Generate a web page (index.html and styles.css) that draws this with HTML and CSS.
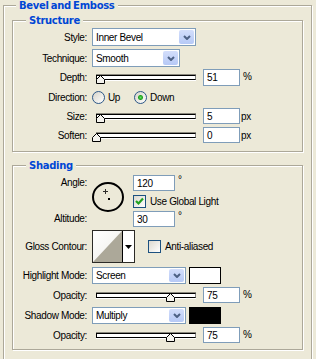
FILE: index.html
```html
<!DOCTYPE html>
<html>
<head>
<meta charset="utf-8">
<link rel="stylesheet" href="styles.css">
</head>
<body>
<fieldset class="group outer">
  <legend class="title t-outer">Bevel and Emboss</legend>

  <fieldset class="group sect sect-structure">
    <legend class="title t-inner">Structure</legend>

    <div class="row h18 first">
      <span class="lbl">Style:</span>
      <div class="select w-style"><span class="val">Inner Bevel</span><span class="drop"><svg width="8" height="5" viewBox="0 0 8 5"><path d="M1 1 L4 4 L7 1" fill="none" stroke="#4d6185" stroke-width="2"/></svg></span></div>
    </div>

    <div class="row h18 mt3">
      <span class="lbl">Technique:</span>
      <div class="select w-tech"><span class="val">Smooth</span><span class="drop"><svg width="8" height="5" viewBox="0 0 8 5"><path d="M1 1 L4 4 L7 1" fill="none" stroke="#4d6185" stroke-width="2"/></svg></span></div>
    </div>

    <div class="row h17 mt2">
      <span class="lbl">Depth:</span>
      <div class="slider"><div class="track"></div><svg class="thumb" style="left:4px" width="9" height="9" viewBox="0 0 9 9"><polygon points="4.5,0.5 8.5,4.5 8.5,8.5 0.5,8.5 0.5,4.5" fill="#f4f3ee" stroke="#000"/></svg></div>
      <span class="num">51</span><span class="unit">%</span>
    </div>

    <div class="row h17 mt3">
      <span class="lbl">Direction:</span>
      <span class="radio"></span><span class="rlbl">Up</span>
      <span class="radio on rgap"></span><span class="rlbl">Down</span>
    </div>

    <div class="row h16 mt2">
      <span class="lbl">Size:</span>
      <div class="slider"><div class="track"></div><svg class="thumb" style="left:4px" width="9" height="9" viewBox="0 0 9 9"><polygon points="4.5,0.5 8.5,4.5 8.5,8.5 0.5,8.5 0.5,4.5" fill="#f4f3ee" stroke="#000"/></svg></div>
      <span class="num">5</span><span class="unit px">px</span>
    </div>

    <div class="row h16 mt3">
      <span class="lbl">Soften:</span>
      <div class="slider"><div class="track"></div><svg class="thumb" style="left:0px" width="9" height="9" viewBox="0 0 9 9"><polygon points="4.5,0.5 8.5,4.5 8.5,8.5 0.5,8.5 0.5,4.5" fill="#f4f3ee" stroke="#000"/></svg></div>
      <span class="num">0</span><span class="unit px">px</span>
    </div>
  </fieldset>

  <fieldset class="group sect sect-shading">
    <legend class="title t-inner">Shading</legend>

    <div class="angle-grid">
      <span class="lbl a-lbl1">Angle:</span>
      <div class="dial-cell">
        <div class="dial"><span class="cross"></span><span class="dot"></span></div>
      </div>
      <div class="a-row1"><span class="num w42">120</span><span class="deg">°</span></div>
      <div class="a-row2"><span class="check on"><svg width="11" height="11" viewBox="0 0 11 11"><path d="M2 5 L4.5 7.5 L9 2.5" fill="none" stroke="#21a121" stroke-width="2.2"/></svg></span><span class="clbl">Use Global Light</span></div>
      <span class="lbl a-lbl3">Altitude:</span>
      <div class="a-row3"><span class="num w42">30</span><span class="deg">°</span></div>
    </div>

    <div class="row h33 mt3">
      <span class="lbl">Gloss Contour:</span>
      <div class="gloss">
        <div class="curve"><svg width="29" height="31" viewBox="0 0 29 31"><polygon points="0,31 29,0 29,31" fill="#aca899"/></svg></div>
        <div class="gdrop"><svg width="7" height="4" viewBox="0 0 7 4"><polygon points="0,0 7,0 3.5,4" fill="#000"/></svg></div>
      </div>
      <span class="check aa"></span><span class="clbl">Anti-aliased</span>
    </div>

    <div class="row h17 mt4">
      <span class="lbl">Highlight Mode:</span>
      <div class="select w-mode"><span class="val">Screen</span><span class="drop"><svg width="8" height="5" viewBox="0 0 8 5"><path d="M1 1 L4 4 L7 1" fill="none" stroke="#4d6185" stroke-width="2"/></svg></span></div>
      <span class="swatch white"></span>
    </div>

    <div class="row h16 mt3">
      <span class="lbl">Opacity:</span>
      <div class="slider"><div class="track"></div><svg class="thumb" style="left:74px" width="9" height="9" viewBox="0 0 9 9"><polygon points="4.5,0.5 8.5,4.5 8.5,8.5 0.5,8.5 0.5,4.5" fill="#f4f3ee" stroke="#000"/></svg></div>
      <span class="num">75</span><span class="unit">%</span>
    </div>

    <div class="row h17 mt4">
      <span class="lbl">Shadow Mode:</span>
      <div class="select w-mode"><span class="val">Multiply</span><span class="drop"><svg width="8" height="5" viewBox="0 0 8 5"><path d="M1 1 L4 4 L7 1" fill="none" stroke="#4d6185" stroke-width="2"/></svg></span></div>
      <span class="swatch black"></span>
    </div>

    <div class="row h16 mt3">
      <span class="lbl">Opacity:</span>
      <div class="slider"><div class="track"></div><svg class="thumb" style="left:74px" width="9" height="9" viewBox="0 0 9 9"><polygon points="4.5,0.5 8.5,4.5 8.5,8.5 0.5,8.5 0.5,4.5" fill="#f4f3ee" stroke="#000"/></svg></div>
      <span class="num">75</span><span class="unit">%</span>
    </div>
  </fieldset>
</fieldset>
</body>
</html>
```

FILE: styles.css
```css
* { box-sizing: border-box; }
html, body { margin: 0; padding: 0; }
body {
  background: #ece9d8;
  font-family: "Liberation Sans", Arial, sans-serif;
  font-size: 10px;
  letter-spacing: -0.35px;
  color: #000;
  width: 316px;
  height: 359px;
  overflow: hidden;
}

.group {
  border: 1px solid #aca899;
  box-shadow: 1px 1px 0 #fff, inset 1px 1px 0 #fff;
  margin: 0;
  padding: 0;
  min-width: 0;
}
.outer {
  margin: -1px 0 0 3px;
  width: 309px;
  padding: 2px 8px 12px 8px;
}
.title {
  font: bold 10px/13px "DejaVu Sans", Verdana, sans-serif;
  letter-spacing: -0.3px;
  word-spacing: -1px;
  color: #0046d5;
  padding: 0 3px;
  background: #ece9d8;
}
.t-outer { margin-left: 4px; }
.t-inner { margin-left: 13px; }

.sect-structure { padding: 1px 0 8px 0; }
.sect-shading { margin-top: 7px; padding: 0 0 6px 0; }

.row { display: flex; align-items: center; }
.h16 { height: 16px; }
.h17 { height: 17px; }
.h18 { height: 18px; }
.h33 { height: 33px; }
.mt2 { margin-top: 2px; }
.mt3 { margin-top: 3px; }
.mt4 { margin-top: 4px; }

.lbl {
  width: 74px;
  flex: none;
  text-align: right;
  margin-right: 5px;
  white-space: nowrap;
}

.select {
  display: flex;
  align-items: stretch;
  height: 100%;
  border: 1px solid #7f9db9;
  background: #fff;
}
.w-style { width: 104px; }
.w-tech { width: 88px; }
.w-mode { width: 94px; }
.val {
  flex: 1;
  display: flex;
  align-items: center;
  padding-left: 3px;
  white-space: nowrap;
}
.drop {
  width: 15px;
  margin: 1px;
  border-radius: 2px;
  background: linear-gradient(#d3defb, #b6c9f6);
  display: flex;
  align-items: center;
  justify-content: center;
}

.slider {
  position: relative;
  width: 104px;
  height: 14px;
  align-self: flex-start;
  margin-top: 5px;
}
.track {
  margin-left: 4px;
  width: 100px;
  height: 5px;
  border: 1px solid #000;
  border-right-color: #808080;
  background: #fff;
  box-shadow: 0 -1px 0 #8a887e, 0 1px 0 #fff;
  margin-top: 1px;
}
.thumb { position: absolute; top: 1px; }

.num {
  width: 37px;
  height: 100%;
  margin-left: 7px;
  border: 1px solid #7f9db9;
  background: #fff;
  padding-left: 3px;
  display: flex;
  align-items: center;
}
.unit { margin-left: 3px; align-self: flex-start; margin-top: 2px; }
.unit.px { margin-left: 1px; margin-top: 3px; }

.radio {
  width: 13px;
  height: 13px;
  border-radius: 50%;
  border: 1px solid #2c5787;
  background: linear-gradient(135deg, #d6d3c9, #fff);
  flex: none;
}
.radio.on {
  background: radial-gradient(circle, #5ee05e 0, #21a121 2px, rgba(33,161,33,0) 3px), linear-gradient(135deg, #d6d3c9, #fff);
}
.rgap { margin-left: 14px; }
.rlbl { margin-left: 3px; }

.angle-grid {
  margin-top: 3px;
  display: grid;
  grid-template-columns: 74px 36px auto;
  grid-template-rows: 20px 16px 16px;
  column-gap: 5px;
}
.a-lbl1 { grid-column: 1; grid-row: 1; height: 16px; line-height: 16px; }
.a-lbl3 { grid-column: 1; grid-row: 3; height: 16px; line-height: 16px; }
.dial-cell { grid-column: 2; grid-row: 1 / 4; display: flex; align-items: center; }
.a-row1 { grid-column: 3; grid-row: 1; display: flex; height: 16px; }
.a-row2 { grid-column: 3; grid-row: 2; display: flex; align-items: flex-start; }
.a-row3 { grid-column: 3; grid-row: 3; display: flex; height: 16px; }
.num.w42 { width: 42px; margin-left: 0; }
.deg { margin-left: 3px; line-height: 9px; }

.dial {
  position: relative;
  width: 32px;
  height: 30px;
  border: 2px solid #000;
  border-radius: 50%;
  margin-top: -9px;
}
.cross {
  position: absolute;
  left: 9px;
  top: 5px;
  width: 5px;
  height: 5px;
  background: linear-gradient(#000, #000) center / 1px 5px no-repeat, linear-gradient(#000, #000) center / 5px 1px no-repeat;
  opacity: 0.8;
}
.dot {
  position: absolute;
  left: 14px;
  top: 14px;
  width: 2px;
  height: 2px;
  background: #000;
}

.check {
  width: 13px;
  height: 13px;
  border: 1px solid #1c5180;
  background: linear-gradient(135deg, #dcd9cf, #fff);
  flex: none;
  display: flex;
  align-items: center;
  justify-content: center;
}
.clbl { margin-left: 4px; white-space: nowrap; }
.a-row2 .clbl { line-height: 13px; }

.gloss {
  width: 43px;
  height: 33px;
  border: 1px solid #2b2a26;
  background: #fff;
  display: flex;
}
.curve {
  width: 29px;
  background: linear-gradient(135deg, #fff, #eeede8);
  display: flex;
}
.gdrop {
  flex: 1;
  border-left: 1px solid #000;
  display: flex;
  align-items: center;
  justify-content: center;
}
.check.aa { margin-left: 13px; }

.swatch {
  width: 32px;
  height: 100%;
  margin-left: 3px;
  border: 1px solid #000;
}
.swatch.white { background: #fff; }
.swatch.black { background: #000; }
```
